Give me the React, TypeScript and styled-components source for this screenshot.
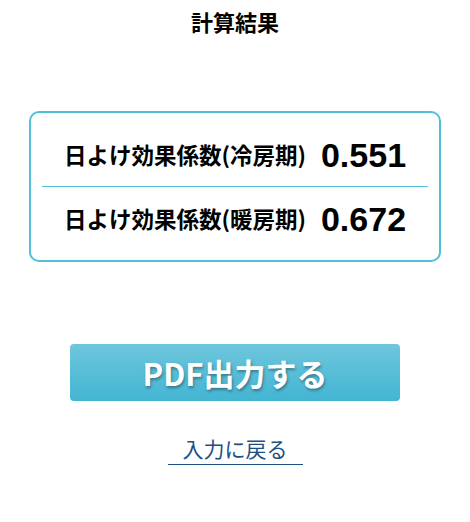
import React from "react";
import styled, { createGlobalStyle } from "styled-components";

const GlobalStyle = createGlobalStyle`
  body {
    margin: 0;
    background: #ffffff;
    font-family: "Noto Sans CJK JP", "Noto Sans", sans-serif;
    color: #000000;
  }
`;

const Page = styled.div`
  width: 470px;
  display: flex;
  flex-direction: column;
  align-items: center;
  padding-top: 5px;
`;

const Title = styled.h1`
  margin: 0;
  font-size: 22px;
  font-weight: 700;
  line-height: 33px;
`;

const Card = styled.div`
  margin-top: 73px;
  width: 412px;
  box-sizing: border-box;
  border: 2px solid #4fc0d8;
  border-radius: 10px;
  padding: 10px 11px;
`;

const Row = styled.div<{ $divider?: boolean }>`
  height: 63px;
  display: flex;
  align-items: center;
  justify-content: center;
  gap: 15px;
  border-bottom: ${(p) => (p.$divider ? "1px solid #4fc0d8" : "none")};
`;

const Label = styled.span`
  font-size: 22.5px;
  font-weight: 700;
  line-height: 1;
`;

const Value = styled.span`
  font-family: "Liberation Sans", Arial, sans-serif;
  font-size: 34px;
  font-weight: 700;
  line-height: 1;
`;

const PdfButton = styled.button`
  margin-top: 82px;
  width: 330px;
  height: 57px;
  border: none;
  border-radius: 4px;
  background: linear-gradient(to bottom, #6ec6dc, #43b5d3);
  color: #ffffff;
  font-family: "Noto Sans CJK JP", "Noto Sans", sans-serif;
  font-size: 31px;
  font-weight: 700;
  text-shadow: 1px 2px 3px rgba(0, 0, 0, 0.35);
  cursor: pointer;
  padding: 0;
`;

const BackLink = styled.a`
  margin-top: 33px;
  display: inline-block;
  padding: 0 15px 2px;
  font-size: 21px;
  line-height: 28px;
  color: #1d4f82;
  text-decoration: none;
  border-bottom: 1px solid #1d4f82;
`;

const results = [
  { label: "日よけ効果係数(冷房期)", value: "0.551" },
  { label: "日よけ効果係数(暖房期)", value: "0.672" },
];

const App: React.FC = () => {
  return (
    <>
      <GlobalStyle />
      <Page>
        <Title>計算結果</Title>
        <Card>
          {results.map((r, i) => (
            <Row key={r.label} $divider={i === 0}>
              <Label>{r.label}</Label>
              <Value>{r.value}</Value>
            </Row>
          ))}
        </Card>
        <PdfButton>PDF出力する</PdfButton>
        <BackLink href="#">入力に戻る</BackLink>
      </Page>
    </>
  );
};

export default App;
